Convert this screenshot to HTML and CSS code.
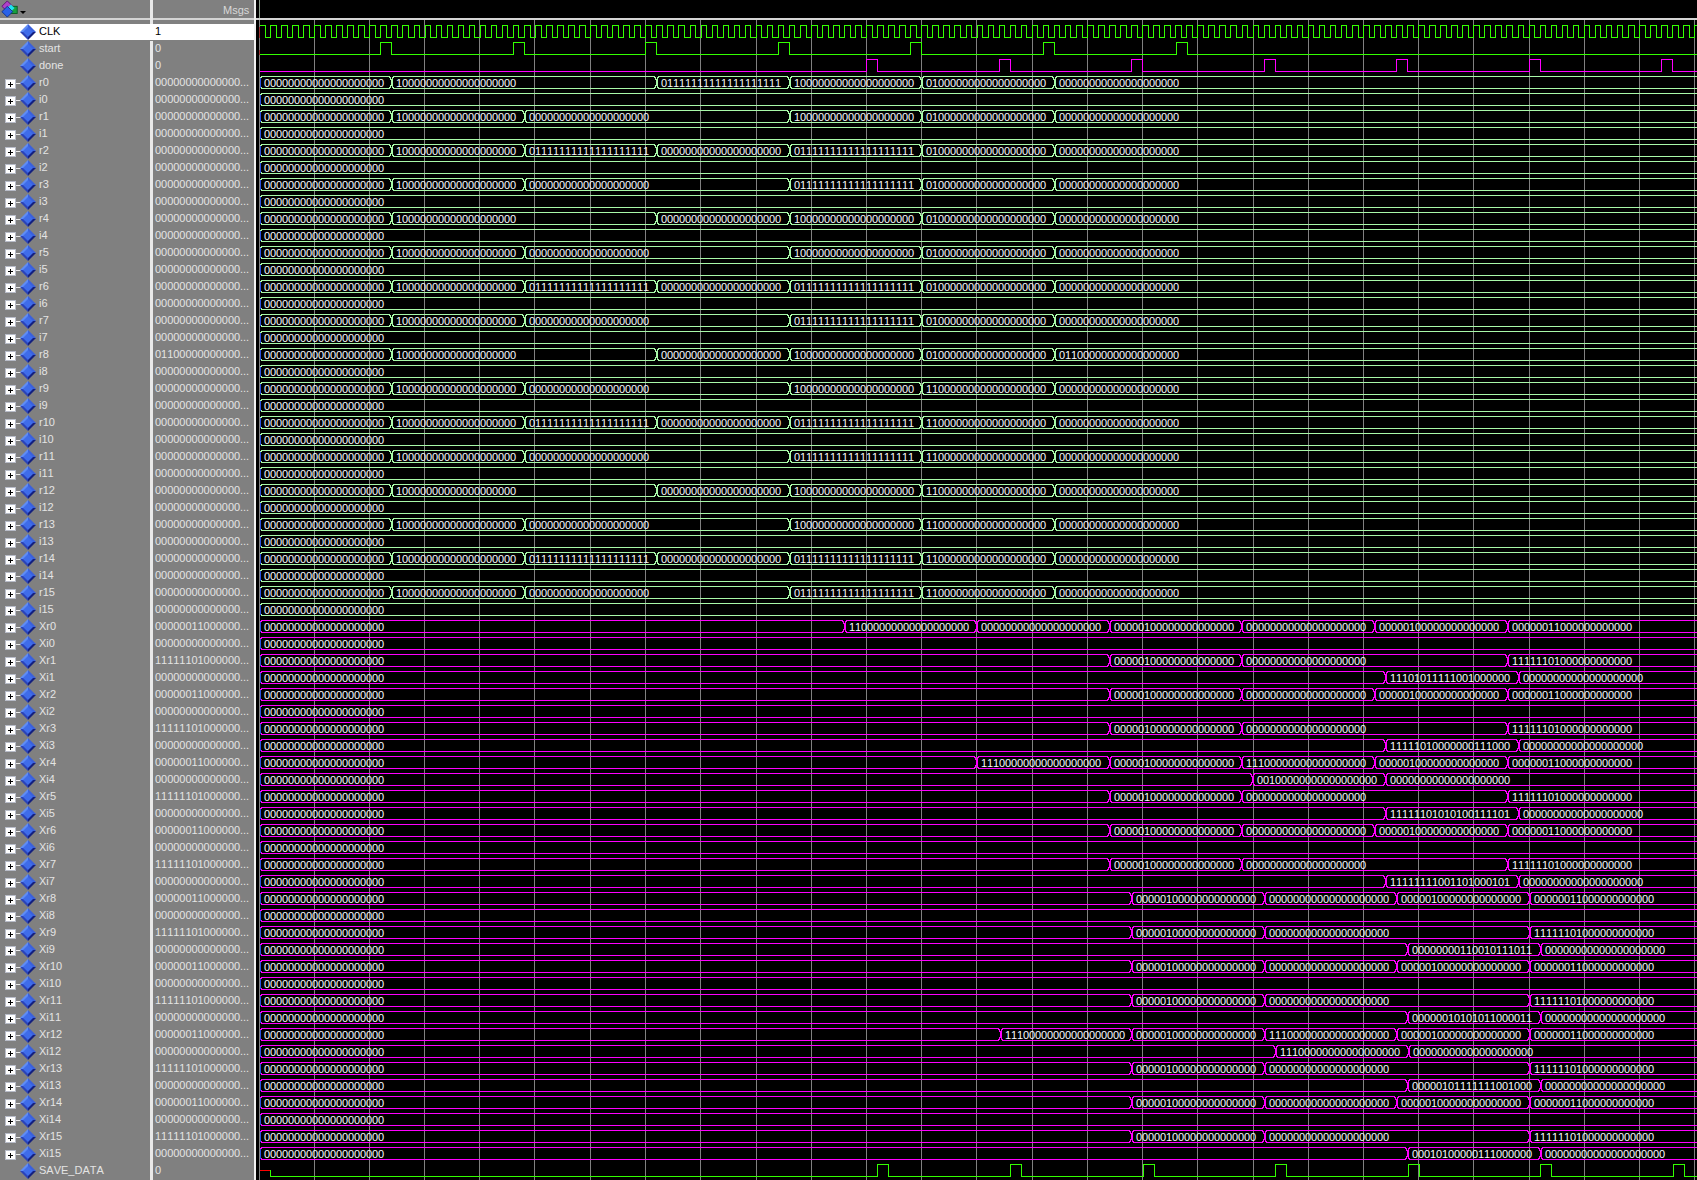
FILE: index.html
```html
<!DOCTYPE html>
<html lang="en">
<head>
<meta charset="utf-8">
<title>Wave</title>
<link rel="stylesheet" href="styles.css">
</head>
<body>
<svg class="defs" width="0" height="0" aria-hidden="true">
  <defs>
    <g id="d">
      <polygon points="28,0 20,8 28,8" fill="#5f8cf5"/>
      <polygon points="28,0 36,8 28,8" fill="#3a60dc"/>
      <polygon points="20,8 28,16 28,8" fill="#2b43b8"/>
      <polygon points="36,8 28,16 28,8" fill="#14207f"/>
      <polygon points="28,3 33,8 28,13 23,8" fill="#3f6cea"/>
    </g>
    <g id="s"><use href="#d"/></g>
    <g id="e">
      <rect x="5.5" y="4.5" width="10" height="9" fill="#fff" stroke="#b8bcc8"/>
      <path d="M8 9h5M10.500 6.500v5" stroke="#000" stroke-width="1" shape-rendering="crispEdges"/>
      <path d="M16 8.500h5" stroke="#e8e8e8" shape-rendering="crispEdges"/>
      <use href="#d"/>
    </g>
  </defs>
</svg>
<main class="window">
  <section class="signals">
    <header class="sig-head">
      <svg class="group-ico" viewBox="0 0 20 20" width="18" height="18">
        <polygon points="7,1 13,7 7,13 1,7" fill="#b040c8" stroke="#5a1070"/>
        <rect x="11" y="7" width="7" height="8" fill="#18a040" stroke="#0a5a20"/>
        <polygon points="11,5 15,9 11,13 7,9" fill="#20e0f0"/>
        <polygon points="7,7 13,13 7,19 1,13" fill="#2a62e8" stroke="#10308a"/>
      </svg>
      <span class="caret"></span>
      <span class="msgs-title">Msgs</span>
    </header>
    <ul class="sig-list">
      <li class="sig selected"><svg class="ico"><use href="#s"/></svg><span class="nm">CLK</span><span class="mv">1</span></li>
      <li class="sig"><svg class="ico"><use href="#s"/></svg><span class="nm">start</span><span class="mv">0</span></li>
      <li class="sig"><svg class="ico"><use href="#s"/></svg><span class="nm">done</span><span class="mv">0</span></li>
      <li class="sig"><svg class="ico"><use href="#e"/></svg><span class="nm">r0</span><span class="mv">00000000000000...</span></li>
      <li class="sig"><svg class="ico"><use href="#e"/></svg><span class="nm">i0</span><span class="mv">00000000000000...</span></li>
      <li class="sig"><svg class="ico"><use href="#e"/></svg><span class="nm">r1</span><span class="mv">00000000000000...</span></li>
      <li class="sig"><svg class="ico"><use href="#e"/></svg><span class="nm">i1</span><span class="mv">00000000000000...</span></li>
      <li class="sig"><svg class="ico"><use href="#e"/></svg><span class="nm">r2</span><span class="mv">00000000000000...</span></li>
      <li class="sig"><svg class="ico"><use href="#e"/></svg><span class="nm">i2</span><span class="mv">00000000000000...</span></li>
      <li class="sig"><svg class="ico"><use href="#e"/></svg><span class="nm">r3</span><span class="mv">00000000000000...</span></li>
      <li class="sig"><svg class="ico"><use href="#e"/></svg><span class="nm">i3</span><span class="mv">00000000000000...</span></li>
      <li class="sig"><svg class="ico"><use href="#e"/></svg><span class="nm">r4</span><span class="mv">00000000000000...</span></li>
      <li class="sig"><svg class="ico"><use href="#e"/></svg><span class="nm">i4</span><span class="mv">00000000000000...</span></li>
      <li class="sig"><svg class="ico"><use href="#e"/></svg><span class="nm">r5</span><span class="mv">00000000000000...</span></li>
      <li class="sig"><svg class="ico"><use href="#e"/></svg><span class="nm">i5</span><span class="mv">00000000000000...</span></li>
      <li class="sig"><svg class="ico"><use href="#e"/></svg><span class="nm">r6</span><span class="mv">00000000000000...</span></li>
      <li class="sig"><svg class="ico"><use href="#e"/></svg><span class="nm">i6</span><span class="mv">00000000000000...</span></li>
      <li class="sig"><svg class="ico"><use href="#e"/></svg><span class="nm">r7</span><span class="mv">00000000000000...</span></li>
      <li class="sig"><svg class="ico"><use href="#e"/></svg><span class="nm">i7</span><span class="mv">00000000000000...</span></li>
      <li class="sig"><svg class="ico"><use href="#e"/></svg><span class="nm">r8</span><span class="mv">01100000000000...</span></li>
      <li class="sig"><svg class="ico"><use href="#e"/></svg><span class="nm">i8</span><span class="mv">00000000000000...</span></li>
      <li class="sig"><svg class="ico"><use href="#e"/></svg><span class="nm">r9</span><span class="mv">00000000000000...</span></li>
      <li class="sig"><svg class="ico"><use href="#e"/></svg><span class="nm">i9</span><span class="mv">00000000000000...</span></li>
      <li class="sig"><svg class="ico"><use href="#e"/></svg><span class="nm">r10</span><span class="mv">00000000000000...</span></li>
      <li class="sig"><svg class="ico"><use href="#e"/></svg><span class="nm">i10</span><span class="mv">00000000000000...</span></li>
      <li class="sig"><svg class="ico"><use href="#e"/></svg><span class="nm">r11</span><span class="mv">00000000000000...</span></li>
      <li class="sig"><svg class="ico"><use href="#e"/></svg><span class="nm">i11</span><span class="mv">00000000000000...</span></li>
      <li class="sig"><svg class="ico"><use href="#e"/></svg><span class="nm">r12</span><span class="mv">00000000000000...</span></li>
      <li class="sig"><svg class="ico"><use href="#e"/></svg><span class="nm">i12</span><span class="mv">00000000000000...</span></li>
      <li class="sig"><svg class="ico"><use href="#e"/></svg><span class="nm">r13</span><span class="mv">00000000000000...</span></li>
      <li class="sig"><svg class="ico"><use href="#e"/></svg><span class="nm">i13</span><span class="mv">00000000000000...</span></li>
      <li class="sig"><svg class="ico"><use href="#e"/></svg><span class="nm">r14</span><span class="mv">00000000000000...</span></li>
      <li class="sig"><svg class="ico"><use href="#e"/></svg><span class="nm">i14</span><span class="mv">00000000000000...</span></li>
      <li class="sig"><svg class="ico"><use href="#e"/></svg><span class="nm">r15</span><span class="mv">00000000000000...</span></li>
      <li class="sig"><svg class="ico"><use href="#e"/></svg><span class="nm">i15</span><span class="mv">00000000000000...</span></li>
      <li class="sig"><svg class="ico"><use href="#e"/></svg><span class="nm">Xr0</span><span class="mv">00000011000000...</span></li>
      <li class="sig"><svg class="ico"><use href="#e"/></svg><span class="nm">Xi0</span><span class="mv">00000000000000...</span></li>
      <li class="sig"><svg class="ico"><use href="#e"/></svg><span class="nm">Xr1</span><span class="mv">11111101000000...</span></li>
      <li class="sig"><svg class="ico"><use href="#e"/></svg><span class="nm">Xi1</span><span class="mv">00000000000000...</span></li>
      <li class="sig"><svg class="ico"><use href="#e"/></svg><span class="nm">Xr2</span><span class="mv">00000011000000...</span></li>
      <li class="sig"><svg class="ico"><use href="#e"/></svg><span class="nm">Xi2</span><span class="mv">00000000000000...</span></li>
      <li class="sig"><svg class="ico"><use href="#e"/></svg><span class="nm">Xr3</span><span class="mv">11111101000000...</span></li>
      <li class="sig"><svg class="ico"><use href="#e"/></svg><span class="nm">Xi3</span><span class="mv">00000000000000...</span></li>
      <li class="sig"><svg class="ico"><use href="#e"/></svg><span class="nm">Xr4</span><span class="mv">00000011000000...</span></li>
      <li class="sig"><svg class="ico"><use href="#e"/></svg><span class="nm">Xi4</span><span class="mv">00000000000000...</span></li>
      <li class="sig"><svg class="ico"><use href="#e"/></svg><span class="nm">Xr5</span><span class="mv">11111101000000...</span></li>
      <li class="sig"><svg class="ico"><use href="#e"/></svg><span class="nm">Xi5</span><span class="mv">00000000000000...</span></li>
      <li class="sig"><svg class="ico"><use href="#e"/></svg><span class="nm">Xr6</span><span class="mv">00000011000000...</span></li>
      <li class="sig"><svg class="ico"><use href="#e"/></svg><span class="nm">Xi6</span><span class="mv">00000000000000...</span></li>
      <li class="sig"><svg class="ico"><use href="#e"/></svg><span class="nm">Xr7</span><span class="mv">11111101000000...</span></li>
      <li class="sig"><svg class="ico"><use href="#e"/></svg><span class="nm">Xi7</span><span class="mv">00000000000000...</span></li>
      <li class="sig"><svg class="ico"><use href="#e"/></svg><span class="nm">Xr8</span><span class="mv">00000011000000...</span></li>
      <li class="sig"><svg class="ico"><use href="#e"/></svg><span class="nm">Xi8</span><span class="mv">00000000000000...</span></li>
      <li class="sig"><svg class="ico"><use href="#e"/></svg><span class="nm">Xr9</span><span class="mv">11111101000000...</span></li>
      <li class="sig"><svg class="ico"><use href="#e"/></svg><span class="nm">Xi9</span><span class="mv">00000000000000...</span></li>
      <li class="sig"><svg class="ico"><use href="#e"/></svg><span class="nm">Xr10</span><span class="mv">00000011000000...</span></li>
      <li class="sig"><svg class="ico"><use href="#e"/></svg><span class="nm">Xi10</span><span class="mv">00000000000000...</span></li>
      <li class="sig"><svg class="ico"><use href="#e"/></svg><span class="nm">Xr11</span><span class="mv">11111101000000...</span></li>
      <li class="sig"><svg class="ico"><use href="#e"/></svg><span class="nm">Xi11</span><span class="mv">00000000000000...</span></li>
      <li class="sig"><svg class="ico"><use href="#e"/></svg><span class="nm">Xr12</span><span class="mv">00000011000000...</span></li>
      <li class="sig"><svg class="ico"><use href="#e"/></svg><span class="nm">Xi12</span><span class="mv">00000000000000...</span></li>
      <li class="sig"><svg class="ico"><use href="#e"/></svg><span class="nm">Xr13</span><span class="mv">11111101000000...</span></li>
      <li class="sig"><svg class="ico"><use href="#e"/></svg><span class="nm">Xi13</span><span class="mv">00000000000000...</span></li>
      <li class="sig"><svg class="ico"><use href="#e"/></svg><span class="nm">Xr14</span><span class="mv">00000011000000...</span></li>
      <li class="sig"><svg class="ico"><use href="#e"/></svg><span class="nm">Xi14</span><span class="mv">00000000000000...</span></li>
      <li class="sig"><svg class="ico"><use href="#e"/></svg><span class="nm">Xr15</span><span class="mv">11111101000000...</span></li>
      <li class="sig"><svg class="ico"><use href="#e"/></svg><span class="nm">Xi15</span><span class="mv">00000000000000...</span></li>
      <li class="sig"><svg class="ico"><use href="#s"/></svg><span class="nm">SAVE_DATA</span><span class="mv">0</span></li>
    </ul>
  </section>
  <section class="waves">
    <header class="wave-head"><span class="cursor-tick"></span></header>
    <svg id="wave" class="wave-canvas" viewBox="256 20 1441 1160" width="1441" height="1160"></svg>
  </section>
</main>
<script src="script.js"></script>
</body>
</html>
```
FILE: styles.css
```css
* { box-sizing: border-box; }
html, body { margin: 0; padding: 0; background: #000; overflow: hidden; }
body { font: 11px/15px "Liberation Sans", Arial, sans-serif; color: #e4e4e4; font-kerning: none; }
.defs { display: block; height: 0; }
.window { display: flex; width: 1697px; height: 1180px; }

.signals { width: 256px; height: 1180px; background: #808080; border-right: 2px solid #f2f2f2; display: flex; flex-direction: column; flex: none; }
.sig-head { height: 24px; flex: none; display: flex; align-items: flex-start; background: linear-gradient(#808080 18px, #d4d4d4 18px, #d4d4d4 20px, #808080 20px); }
.sig-head::before { content: ""; width: 3px; height: 24px; background: #e8e8e8; order: 1; margin-left: 124px; }
.group-ico { flex: none; margin-left: 1px; }
.caret { flex: none; width: 0; height: 0; margin: 11px 0 0 1px; border: 3px solid transparent; border-top: 3px solid #000; border-bottom: 0; }
.msgs-title { order: 2; margin: 3px 0 0 70px; color: #d8d8d8; }

.sig-list { list-style: none; margin: 0; padding: 0; }
.sig { display: flex; height: 17px; white-space: nowrap; }
.ico { width: 36px; height: 17px; flex: none; }
.nm { width: 114px; flex: none; padding: 0 0 0 3px; height: 17px; }
.mv { width: 104px; flex: none; padding-left: 2px; height: 17px; border-left: 3px solid #e8e8e8; letter-spacing: -0.04px; }
.selected .ico, .selected .nm, .selected .mv { height: 16px; background: #fff; color: #000; }
.selected .mv { border-left-color: #fff; }

.waves { flex: 1; display: flex; flex-direction: column; min-width: 0; }
.wave-head { height: 20px; flex: none; border-bottom: 2px solid #d4d4d4; padding-left: 3px; }
.cursor-tick { display: block; width: 1px; height: 18px; background: #8a9a8a; }
.wave-canvas { display: block; flex: none; }

.grid { stroke: #808080; shape-rendering: crispEdges; fill: none; }
.bright { stroke: #33ff00; fill: none; shape-rendering: crispEdges; }
.mag { stroke: #ff00ff; fill: none; shape-rendering: crispEdges; }
.bus { stroke: #a8f8a8; fill: none; shape-rendering: crispEdges; }
.red { stroke: #ff0000; fill: none; shape-rendering: crispEdges; }
.dim { stroke: #9a3030; fill: none; shape-rendering: crispEdges; }
.tick { stroke: #2a50e0; fill: none; shape-rendering: crispEdges; }
.val { font: 11px "Liberation Sans", Arial, sans-serif; font-kerning: none; letter-spacing: -0.117px; fill: #f8fbff; }
```
FILE: script.js
```js
(function () {
  var svg = document.getElementById('wave');
  var NS = 'http://www.w3.org/2000/svg';
  var END = 1697;
  var rowTop = function (i) { return 24 + 17 * i; };

  function add(tag, attrs, text) {
    var el = document.createElementNS(NS, tag);
    for (var k in attrs) el.setAttribute(k, attrs[k]);
    if (text) el.textContent = text;
    svg.appendChild(el);
  }
  function path(cls, d) { add('path', { 'class': cls, d: d }); }

  // Grid
  var grid = [259, 314, 369, 424, 479, 534, 590, 645, 700, 756, 811, 866, 921, 976, 1032, 1087, 1142, 1197, 1253, 1308, 1363, 1418, 1473, 1529, 1584, 1639, 1694];
  path('grid', grid.map(function (x) { return 'M' + (x + .5) + ' 20V1180'; }).join(''));

  // Clock
  var top = rowTop(0) + 1.5, low = rowTop(0) + 13.5;
  var d = 'M260 ' + top + 'H265.500V' + low;
  for (var n = 0; ; n++) {
    var r = Math.round(270 + 11.04 * n);
    var f = Math.round(275.6 + 11.04 * n);
    if (r > END) break;
    d += 'H' + (r + .5) + 'V' + top + 'H' + (f + .5) + 'V' + low;
  }
  path('bright', d);
  path('dim', 'M259.500 ' + (top + 1) + 'V' + low);

  // Pulses
  function pulses(cls, i, rises, startX) {
    var t = rowTop(i) + 1.5, b = rowTop(i) + 13.5, s = 'M' + startX + ' ' + b;
    rises.forEach(function (x) { s += 'H' + (x + .5) + 'V' + t + 'H' + (x + 11.5) + 'V' + b; });
    path(cls, s + 'H' + END);
  }
  pulses('bright', 1, [380, 513, 645, 778, 910, 1043, 1176], 260);
  path('dim', 'M259.500 50V55');
  pulses('mag', 2, [866, 999, 1131, 1264, 1396, 1529, 1661], 260);
  pulses('bright', 67, [877, 1010, 1143, 1275, 1408, 1540, 1673], 270);
  path('red', 'M260 1170.500H270');
  path('bright', 'M270.500 1170V1176');

  // Bus rows
  var Z = '00000000000000000000', A = '10000000000000000000', B = '01111111111111111111';
  var P = '00000100000000000000', Q = '00000011000000000000', R = '11111101000000000000';
  var D = '11000000000000000000', F = '11100000000000000000';
  var C1 = '01000000000000000000', E = '01100000000000000000';
  var K = [259, 391, 524, 656, 789, 921, 1054];

  function t0(k3, c, e) { return [[K[1], A], [K[3], k3], [K[4], A], [K[5], c], [K[6], e]]; }
  function t1(c) { return [[K[1], A], [K[2], Z], [K[4], A], [K[5], c], [K[6], Z]]; }
  function t2(c) { return [[K[1], A], [K[2], B], [K[3], Z], [K[4], B], [K[5], c], [K[6], Z]]; }
  function t3(c) { return [[K[1], A], [K[2], Z], [K[4], B], [K[5], c], [K[6], Z]]; }

  function sx(a) { var o = []; for (var i = 0; i < a.length; i += 2) o.push([a[i], a[i + 1]]); return o; }
  var XA = sx([1109, P, 1241, Z, 1374, P, 1507, Q]);
  var XB = sx([1109, P, 1241, Z, 1507, R]);
  var XC = sx([1131, P, 1264, Z, 1396, P, 1529, Q]);
  var XD = sx([1131, P, 1264, Z, 1529, R]);
  function xi(at, v) { return [[at, v], [at + 133, Z]]; }

  var green = [
    t0(B, C1, Z), [], t1(C1), [], t2(C1), [], t3(C1), [],
    t0(Z, C1, Z), [], t1(C1), [], t2(C1), [], t3(C1), [],
    t0(Z, C1, E), [], t1(D), [], t2(D), [], t3(D), [],
    t0(Z, D, Z), [], t1(D), [], t2(D), [], t3(D), []
  ];
  var magenta = [
    sx([844, D, 976, Z, 1109, P, 1241, Z, 1374, P, 1507, Q]), [],
    XB, xi(1385, '11101011111001000000'),
    XA, [],
    XB, xi(1385, '11111010000000111000'),
    sx([976, F, 1109, P, 1241, F, 1374, P, 1507, Q]), xi(1252, '00100000000000000000'),
    XB, xi(1385, '11111101010100111101'),
    XA, [],
    XB, xi(1385, '11111111001101000101'),
    XC, [],
    XD, xi(1407, '00000000110010111011'),
    XC, [],
    XD, xi(1407, '00000010101011000011'),
    sx([1000, F, 1131, P, 1264, F, 1396, P, 1529, Q]), xi(1275, F),
    XD, xi(1407, '00000101111111001000'),
    XC, [],
    XD, xi(1407, '00010100000111000000')
  ];

  function rightEnd(x, t, b) {
    return 'H' + (x - 1.5) + 'L' + (x - .5) + ' ' + (t + 1) + 'L' + (x + .5) + ' ' + (t + 3) + 'V' + (b - 3) +
           'L' + (x - .5) + ' ' + (b - 1) + 'L' + (x - 1.5) + ' ' + b;
  }
  function leftEnd(x, t, b, startTop) {
    // from the top line down to the bottom line on the left side
    return 'L' + (x + .5) + ' ' + (t + 1) + 'L' + (x - .5) + ' ' + (t + 3) + 'V' + (b - 3) +
           'L' + (x + .5) + ' ' + (b - 1) + 'L' + (x + 1.5) + ' ' + b;
  }
  function bus(i, changes, cls) {
    var y = rowTop(i);
    var t = y + 1.5, b = y + 13.5;
    var segs = [[259, Z]].concat(changes);
    var s = '';
    segs.forEach(function (seg, n) {
      var L = seg[0] + 1.5;
      var next = segs[n + 1];
      if (next) {
        var X = next[0] - .5;
        s += 'M' + (L + 1.5) + ' ' + t + rightEnd(X, t, b) + 'H' + (L + 1.5) + 'M' + (L + 1.5) + ' ' + t + leftEnd(L, t, b);
      } else {
        s += 'M' + END + ' ' + t + 'H' + (L + 1.5) + leftEnd(L, t, b) + 'H' + END;
      }
    });
    path(cls, s);
    path('tick', 'M260.500 ' + (t + 1) + 'V' + (b - 1));
    segs.forEach(function (seg) {
      add('text', { 'class': 'val', x: seg[0] + 5, y: y + 12 }, seg[1]);
    });
  }
  green.forEach(function (c, n) { bus(3 + n, c, 'bus'); });
  magenta.forEach(function (c, n) { bus(35 + n, c, 'mag'); });
})();
```
